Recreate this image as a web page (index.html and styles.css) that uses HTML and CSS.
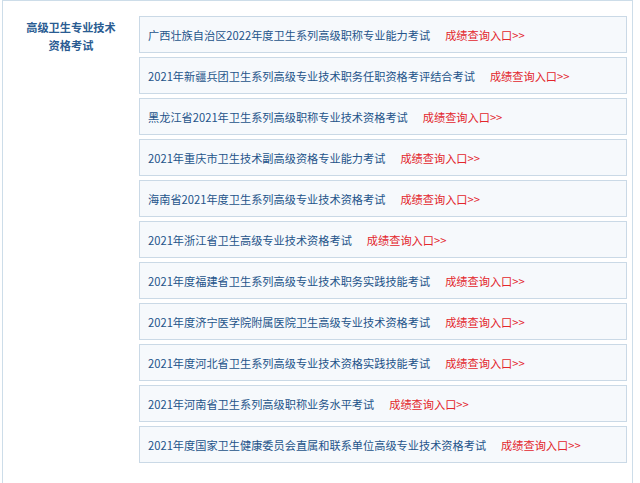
FILE: index.html
```html
<!DOCTYPE html>
<html lang="zh-CN">
<head>
<meta charset="utf-8">
<link rel="stylesheet" href="styles.css">
</head>
<body>
<div class="panel">
  <div class="side">高级卫生专业技术<br>资格考试</div>
  <ul class="list">
    <li class="item"><span class="name">广西壮族自治区2022年度卫生系列高级职称专业能力考试</span><a class="link" href="#">成绩查询入口&gt;&gt;</a></li>
    <li class="item"><span class="name">2021年新疆兵团卫生系列高级专业技术职务任职资格考评结合考试</span><a class="link" href="#">成绩查询入口&gt;&gt;</a></li>
    <li class="item"><span class="name">黑龙江省2021年卫生系列高级职称专业技术资格考试</span><a class="link" href="#">成绩查询入口&gt;&gt;</a></li>
    <li class="item"><span class="name">2021年重庆市卫生技术副高级资格专业能力考试</span><a class="link" href="#">成绩查询入口&gt;&gt;</a></li>
    <li class="item"><span class="name">海南省2021年度卫生系列高级专业技术资格考试</span><a class="link" href="#">成绩查询入口&gt;&gt;</a></li>
    <li class="item"><span class="name">2021年浙江省卫生高级专业技术资格考试</span><a class="link" href="#">成绩查询入口&gt;&gt;</a></li>
    <li class="item"><span class="name">2021年度福建省卫生系列高级专业技术职务实践技能考试</span><a class="link" href="#">成绩查询入口&gt;&gt;</a></li>
    <li class="item"><span class="name">2021年度济宁医学院附属医院卫生高级专业技术资格考试</span><a class="link" href="#">成绩查询入口&gt;&gt;</a></li>
    <li class="item"><span class="name">2021年度河北省卫生系列高级专业技术资格实践技能考试</span><a class="link" href="#">成绩查询入口&gt;&gt;</a></li>
    <li class="item"><span class="name">2021年河南省卫生系列高级职称业务水平考试</span><a class="link" href="#">成绩查询入口&gt;&gt;</a></li>
    <li class="item"><span class="name">2021年度国家卫生健康委员会直属和联系单位高级专业技术资格考试</span><a class="link" href="#">成绩查询入口&gt;&gt;</a></li>
  </ul>
</div>
</body>
</html>
```
FILE: styles.css
```css
html, body {
  margin: 0;
  padding: 0;
  background: #ffffff;
}
body {
  font-family: "Noto Sans CJK SC", "Noto Sans", sans-serif;
  font-size: 11.2px;
}
.panel {
  margin-left: 2px;
  width: 629px;
  border: 1px solid #cddde9;
  border-bottom: none;
  padding: 15px 0 30px 0;
  display: flex;
}
.side {
  width: 136px;
  flex: none;
  text-align: center;
  font-weight: bold;
  color: #2a5c92;
  line-height: 18px;
  padding-top: 2px;
}
.list {
  list-style: none;
  margin: 0;
  padding: 0;
  width: 488px;
  display: flex;
  flex-direction: column;
  gap: 4px;
}
.item {
  box-sizing: border-box;
  height: 37px;
  border: 1px solid #cad9e6;
  background: #f6f9fc;
  display: flex;
  align-items: center;
  padding-left: 8px;
  line-height: 16px;
}
.name {
  color: #24548a;
}
.link {
  color: #e3262c;
  text-decoration: none;
  margin-left: 15px;
}
```
